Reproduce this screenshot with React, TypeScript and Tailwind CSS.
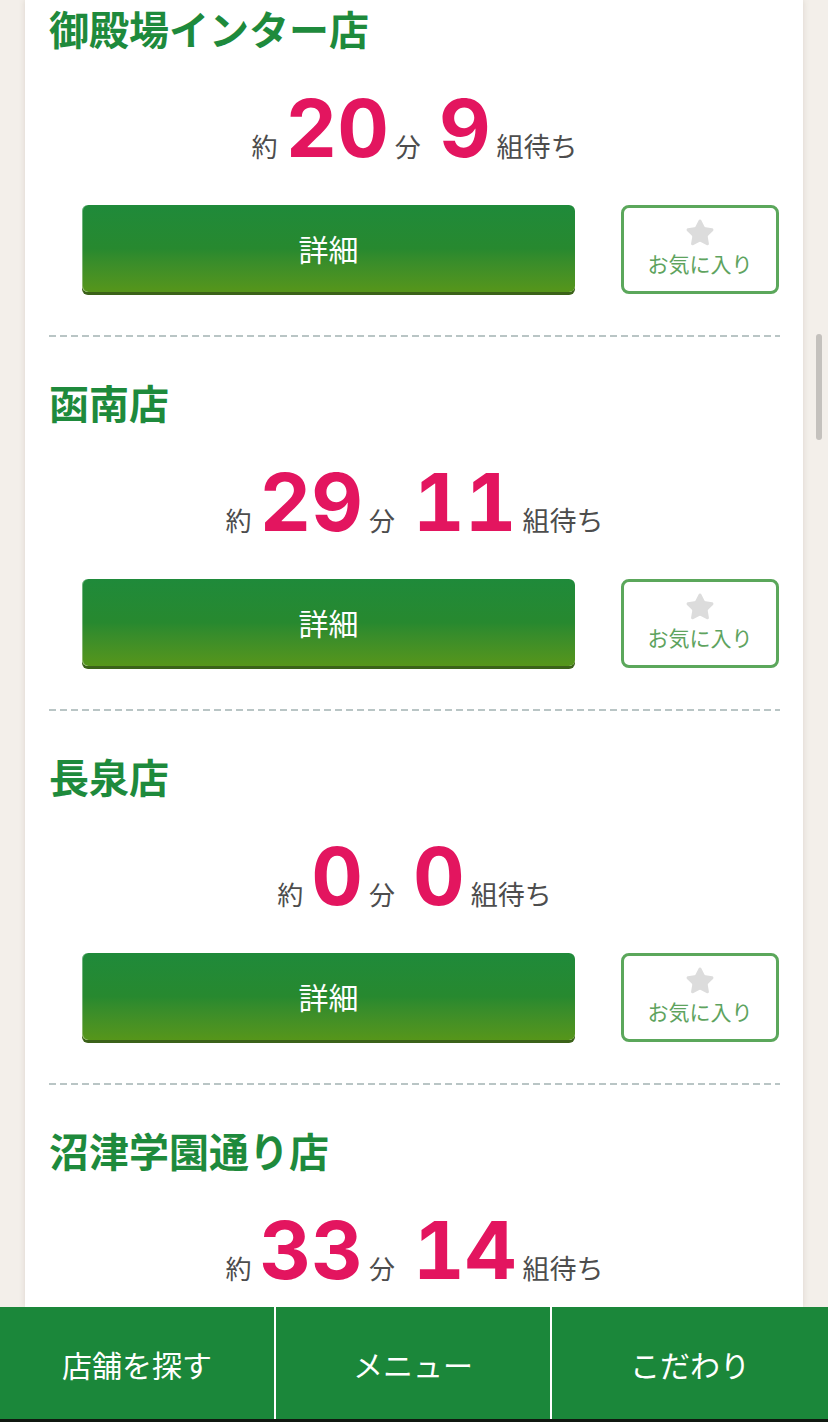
import { Star } from 'lucide-react';

const stores = [
  { name: '御殿場インター店', minutes: '20', groups: '9' },
  { name: '函南店', minutes: '29', groups: '11' },
  { name: '長泉店', minutes: '0', groups: '0' },
  { name: '沼津学園通り店', minutes: '33', groups: '14' },
];

const jp = "font-['Noto_Sans_CJK_JP',sans-serif]";
const num = "font-['Inter',sans-serif] font-bold text-[80px] text-[#e3155f] tabular-nums";

function StoreRow({ store }: { store: (typeof stores)[number] }) {
  return (
    <section className="pt-[41px]">
      <h2 className={`${jp} text-[40px] leading-[48px] font-bold text-[#1e8a3c]`}>{store.name}</h2>

      <div className="mt-[36px] flex items-baseline justify-center leading-none text-[#4d4d4d]">
        <span className={`${jp} text-[26px] mr-[8px]`}>約</span>
        <span className={num}>{store.minutes}</span>
        <span className={`${jp} text-[26px] ml-[6px]`}>分</span>
        <span className={`${num} ml-[18px]`}>{store.groups}</span>
        <span className={`${jp} text-[27px] ml-[6px]`}>組待ち</span>
      </div>

      <div className="mt-[37px] flex items-start pl-[33px]">
        <button
          className={`${jp} w-[493px] h-[87px] rounded-[6px] bg-gradient-to-b from-[#1f8a3a] via-[#27892f] to-[#56961a] text-white text-[30px] shadow-[inset_1px_0_0_rgba(255,255,255,0.35),0_3px_0_#3b6219]`}
        >
          詳細
        </button>
        <button className="ml-[46px] w-[158px] h-[89px] rounded-[8px] border-[3px] border-[#5ba75b] flex flex-col items-center justify-center bg-white">
          <Star className="w-[30px] h-[30px] text-[#dcdcdc] fill-[#dcdcdc] -mt-[6px]" strokeWidth={1.5} />
          <span className={`${jp} text-[21px] leading-[26px] text-[#5ea35e] mt-[2px]`}>お気に入り</span>
        </button>
      </div>

      <div className="mt-[41px] h-[2px] bg-[repeating-linear-gradient(90deg,#b9c5c5_0_7px,transparent_7px_11px)]" />
    </section>
  );
}

export default function App() {
  return (
    <div className="h-[1422px] flex flex-col bg-[#f3efea]">
      <main className="relative flex-1 overflow-hidden">
        <div className="flow-root mx-[25px] h-full bg-white shadow-[0_0_6px_rgba(120,100,80,0.18)]">
          <div className="-mt-[37px] pl-[24px] pr-[23px]">
            {stores.map((s) => (
              <StoreRow key={s.name} store={s} />
            ))}
          </div>
        </div>
        {/* scroll indicator */}
        <div className="absolute top-[334px] right-[6px] w-[6px] h-[106px] rounded-full bg-[#c4c1bd]" />
      </main>

      <nav
        className={`${jp} h-[115px] shrink-0 bg-[#1b873a] border-b-[3px] border-[#101810] grid grid-cols-[274px_276px_1fr] text-white text-[30px]`}
      >
        <a className="flex items-center justify-center pt-[2px]">店舗を探す</a>
        <a className="flex items-center justify-center pt-[2px] border-l-2 border-white">メニュー</a>
        <a className="flex items-center justify-center pt-[2px] border-l-2 border-white">こだわり</a>
      </nav>
    </div>
  );
}
